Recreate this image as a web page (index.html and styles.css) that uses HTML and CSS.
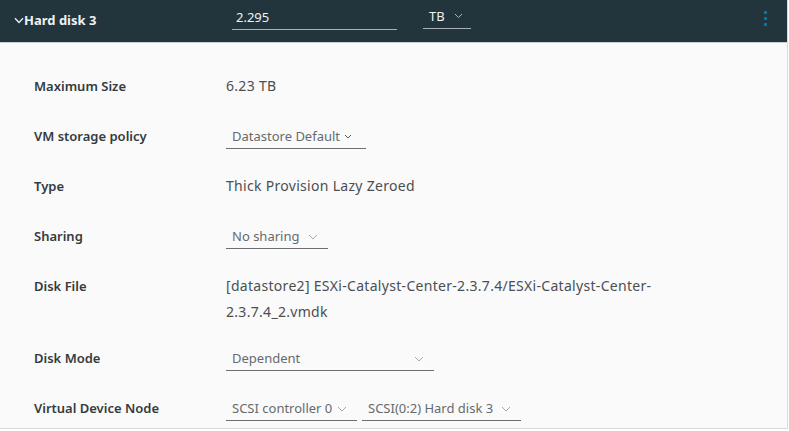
FILE: index.html
```html
<!DOCTYPE html>
<html>
<head>
<meta charset="utf-8">
<link rel="stylesheet" href="styles.css">
</head>
<body>
<div class="panel">
  <div class="header">
    <div class="title">
      <svg class="caret" width="10" height="7" viewBox="0 0 10 7"><path d="M1 1.2 L5 5.4 L9 1.2" fill="none" stroke="#e8eef0" stroke-width="1.4"/></svg>
      <span>Hard disk 3</span>
    </div>
    <div class="size-input">2.295</div>
    <div class="unit-select">TB <svg class="chev" width="9" height="6" viewBox="0 0 9 6"><path d="M1 1 L4.5 4.6 L8 1" fill="none" stroke="#aab6bb" stroke-width="1"/></svg></div>
    <div class="kebab"><i></i><i></i><i></i></div>
  </div>
  <div class="body">
    <div class="row">
      <div class="label">Maximum Size</div>
      <div class="value text">6.23 TB</div>
    </div>
    <div class="row">
      <div class="label">VM storage policy</div>
      <div class="value"><div class="select w-policy"><span>Datastore Default</span><svg class="chev tight" width="8" height="5" viewBox="0 0 8 5"><path d="M1 1 L4 4 L7 1" fill="none" stroke="#555" stroke-width="1"/></svg></div></div>
    </div>
    <div class="row">
      <div class="label">Type</div>
      <div class="value text">Thick Provision Lazy Zeroed</div>
    </div>
    <div class="row">
      <div class="label">Sharing</div>
      <div class="value"><div class="select w-share"><span>No sharing</span><svg class="chev" width="10" height="6" viewBox="0 0 10 6"><path d="M1 1 L5 5 L9 1" fill="none" stroke="#aaa" stroke-width="1"/></svg></div></div>
    </div>
    <div class="row file">
      <div class="label">Disk File</div>
      <div class="value text">[datastore2] ESXi-Catalyst-Center-2.3.7.4/ESXi-Catalyst-Center-<br>2.3.7.4_2.vmdk</div>
    </div>
    <div class="row">
      <div class="label">Disk Mode</div>
      <div class="value"><div class="select w-mode"><span>Dependent</span><svg class="chev" width="10" height="6" viewBox="0 0 10 6"><path d="M1 1 L5 5 L9 1" fill="none" stroke="#aaa" stroke-width="1"/></svg></div></div>
    </div>
    <div class="row">
      <div class="label">Virtual Device Node</div>
      <div class="value pair">
        <div class="select w-ctrl"><span>SCSI controller 0</span><svg class="chev" width="10" height="6" viewBox="0 0 10 6"><path d="M1 1 L5 5 L9 1" fill="none" stroke="#aaa" stroke-width="1"/></svg></div>
        <div class="select w-node"><span>SCSI(0:2) Hard disk 3</span><svg class="chev" width="10" height="6" viewBox="0 0 10 6"><path d="M1 1 L5 5 L9 1" fill="none" stroke="#aaa" stroke-width="1"/></svg></div>
      </div>
    </div>
  </div>
</div>
</body>
</html>
```

FILE: styles.css
```css
* { box-sizing: border-box; }
html, body { margin: 0; padding: 0; background: #ffffff; }
body { font-family: "Noto Sans", "Open Sans", sans-serif; width: 789px; height: 431px; overflow: hidden; }

.panel {
  width: 788px;
  height: 429px;
  background: #fafafa;
  border-right: 1px solid #d7dbdd;
  border-bottom: 1px solid #d4d8da;
}

.header {
  height: 43px;
  background: #22343c;
  border-bottom: 1px solid #c9d1d5;
  display: flex;
  align-items: center;
  position: relative;
}
.title {
  display: flex;
  align-items: center;
  gap: 0;
  padding-left: 14px;
  width: 232px;
  color: #eef2f3;
  font-weight: 700;
  font-size: 13px;
  margin-top: -2px;
}
.caret { margin-top: 1px; }
.size-input {
  width: 165px;
  height: 22px;
  padding-left: 4px;
  color: #eef2f3;
  font-size: 13px;
  border-bottom: 1px solid #a7b1b5;
  margin-top: -4px;
  line-height: 18px;
}
.unit-select {
  margin-left: 26px;
  width: 48px;
  height: 22px;
  padding-left: 6px;
  color: #eef2f3;
  font-size: 13px;
  border-bottom: 1px solid #a7b1b5;
  margin-top: -6px;
  line-height: 18px;
  display: flex;
  align-items: baseline;
  gap: 9px;
}
.unit-select .chev { align-self: center; margin-top: -3px; }
.kebab {
  margin-left: auto;
  margin-right: 20px;
  display: flex;
  flex-direction: column;
  gap: 3px;
  margin-top: -5px;
}
.kebab i { display: block; width: 3px; height: 3px; background: #1377a6; border-radius: 1px; }

.body {
  padding: 30px 0 0 34px;
  display: flex;
  flex-direction: column;
  gap: 24px;
}
.row {
  display: grid;
  grid-template-columns: 192px 1fr;
  line-height: 26px;
  font-size: 13px;
}
.row.file { margin-bottom: -4px; }
.label { color: #333b40; font-weight: 600; }
.value { color: #4a4f52; }
.value.text { font-size: 14px; letter-spacing: 0.3px; }

.select {
  height: 26px;
  display: flex;
  align-items: center;
  padding-left: 6px;
  color: #666a6d;
  border-bottom: 1px solid #6b6f72;
  position: relative;
}
.select .chev { position: absolute; right: 10px; top: 11px; }
.select .chev.tight { position: static; margin-left: 4px; margin-top: 1px; }
.w-policy { width: 140px; }
.w-share { width: 102px; }
.w-mode { width: 208px; }
.w-ctrl { width: 131px; }
.w-node { width: 159px; }
.pair { display: flex; gap: 5px; }
```
